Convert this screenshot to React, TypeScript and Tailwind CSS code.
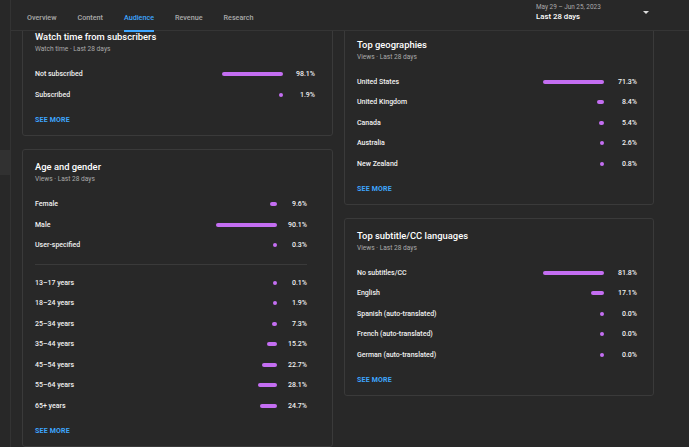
import React from 'react';

type Item = { label: string; value: number };

const MAX_BAR = 61.5;

const subscribers: Item[] = [
  { label: 'Not subscribed', value: 98.1 },
  { label: 'Subscribed', value: 1.9 },
];

const gender: Item[] = [
  { label: 'Female', value: 9.6 },
  { label: 'Male', value: 90.1 },
  { label: 'User-specified', value: 0.3 },
];

const ages: Item[] = [
  { label: '13–17 years', value: 0.1 },
  { label: '18–24 years', value: 1.9 },
  { label: '25–34 years', value: 7.3 },
  { label: '35–44 years', value: 15.2 },
  { label: '45–54 years', value: 22.7 },
  { label: '55–64 years', value: 28.1 },
  { label: '65+ years', value: 24.7 },
];

const geographies: Item[] = [
  { label: 'United States', value: 71.3 },
  { label: 'United Kingdom', value: 8.4 },
  { label: 'Canada', value: 5.4 },
  { label: 'Australia', value: 2.6 },
  { label: 'New Zealand', value: 0.8 },
];

const languages: Item[] = [
  { label: 'No subtitles/CC', value: 81.8 },
  { label: 'English', value: 17.1 },
  { label: 'Spanish (auto-translated)', value: 0.0 },
  { label: 'French (auto-translated)', value: 0.0 },
  { label: 'German (auto-translated)', value: 0.0 },
];

const tabs = ['Overview', 'Content', 'Audience', 'Revenue', 'Research'];

function BarRow({ item, max, pctClass }: { item: Item; max: number; pctClass: string }) {
  const width = Math.max(4.5, (item.value / max) * MAX_BAR);
  return (
    <div className="flex h-[20.5px] items-center">
      <span className="flex-1 text-[7px] font-medium text-[#f1f1f1]">{item.label}</span>
      <div className="flex w-[62px] justify-end">
        <div className="h-[4px] rounded-full bg-[#c46ef2]" style={{ width }} />
      </div>
      <span className={`${pctClass} text-right text-[7px] font-medium text-[#f1f1f1]`}>
        {item.value.toFixed(1)}%
      </span>
    </div>
  );
}

function Card({
  title,
  subtitle,
  className,
  children,
}: {
  title: string;
  subtitle: string;
  className: string;
  children: React.ReactNode;
}) {
  return (
    <div className={`rounded-[3px] border border-[#3a3a3a] bg-[#282828] pt-[10px] pb-[10px] pl-[12px] ${className}`}>
      <h3 className="text-[9.4px] leading-[13px] font-medium text-white">{title}</h3>
      <p className="mt-[1px] text-[6.6px] leading-[10px] text-[#aaaaaa]">{subtitle}</p>
      <div className="mt-[10px]">{children}</div>
      <button className="mt-[10px] block text-[7px] leading-[10px] font-bold tracking-[0.2px] text-[#3ea6ff]">
        SEE MORE
      </button>
    </div>
  );
}

export default function App() {
  return (
    <div
      className="flex h-[447px] w-[689px] overflow-hidden bg-[#282828]"
      style={{ fontFamily: 'Roboto, "Noto Sans", sans-serif' }}
    >
      {/* side rail */}
      <div className="flex w-[11px] flex-col border-r border-[#333333]">
        <div className="mt-[150px] h-[25px] bg-[#313131]" />
      </div>

      <div className="flex min-w-0 flex-1 flex-col">
        {/* header */}
        <div className="flex h-[31px] border-b border-[#353535]">
          <nav className="flex gap-[21px] pl-[16px]">
            {tabs.map((tab) => (
              <div key={tab} className="relative flex h-full items-center pt-[7px]">
                <span
                  className={`text-[7.2px] font-medium ${tab === 'Audience' ? 'text-[#3ea6ff]' : 'text-[#aaaaaa]'}`}
                >
                  {tab}
                </span>
                {tab === 'Audience' && (
                  <span className="absolute bottom-[-2px] left-0 right-0 h-[2px] bg-[#3ea6ff]" />
                )}
              </div>
            ))}
          </nav>
          <div className="ml-auto flex w-[153px] items-start">
            <div className="flex-1 pt-[3px]">
              <div className="text-[6.4px] leading-[8px] text-[#aaaaaa]">May 29 – Jun 25, 2023</div>
              <div className="text-[7.8px] leading-[12px] font-medium text-white">Last 28 days</div>
            </div>
            <div className="mt-[11px] mr-[40px] h-0 w-0 border-x-[3px] border-t-[3.5px] border-x-transparent border-t-[#dddddd]" />
          </div>
        </div>

        {/* content */}
        <div className="flex flex-1 items-start gap-[11px] overflow-hidden pl-[11px]">
          <div className="mt-[-12px] flex w-[311px] flex-col gap-[13px]">
            <Card title="Watch time from subscribers" subtitle="Watch time · Last 28 days" className="pr-[17px]">
              {subscribers.map((item) => (
                <BarRow key={item.label} item={item} max={98.1} pctClass="w-[32px]" />
              ))}
            </Card>
            <Card title="Age and gender" subtitle="Views · Last 28 days" className="pr-[25px]">
              {gender.map((item) => (
                <BarRow key={item.label} item={item} max={90.1} pctClass="w-[30px]" />
              ))}
              <div className="mt-[8px] mb-[8px] h-px bg-[#3a3a3a]" />
              {ages.map((item) => (
                <BarRow key={item.label} item={item} max={90.1} pctClass="w-[30px]" />
              ))}
            </Card>
          </div>

          <div className="mt-[-4.5px] flex w-[310px] flex-col gap-[12.5px]">
            <Card title="Top geographies" subtitle="Views · Last 28 days" className="pr-[16px]">
              {geographies.map((item) => (
                <BarRow key={item.label} item={item} max={71.3} pctClass="w-[33px]" />
              ))}
            </Card>
            <Card title="Top subtitle/CC languages" subtitle="Views · Last 28 days" className="pr-[16px]">
              {languages.map((item) => (
                <BarRow key={item.label} item={item} max={81.8} pctClass="w-[33px]" />
              ))}
            </Card>
          </div>
        </div>
      </div>
    </div>
  );
}
